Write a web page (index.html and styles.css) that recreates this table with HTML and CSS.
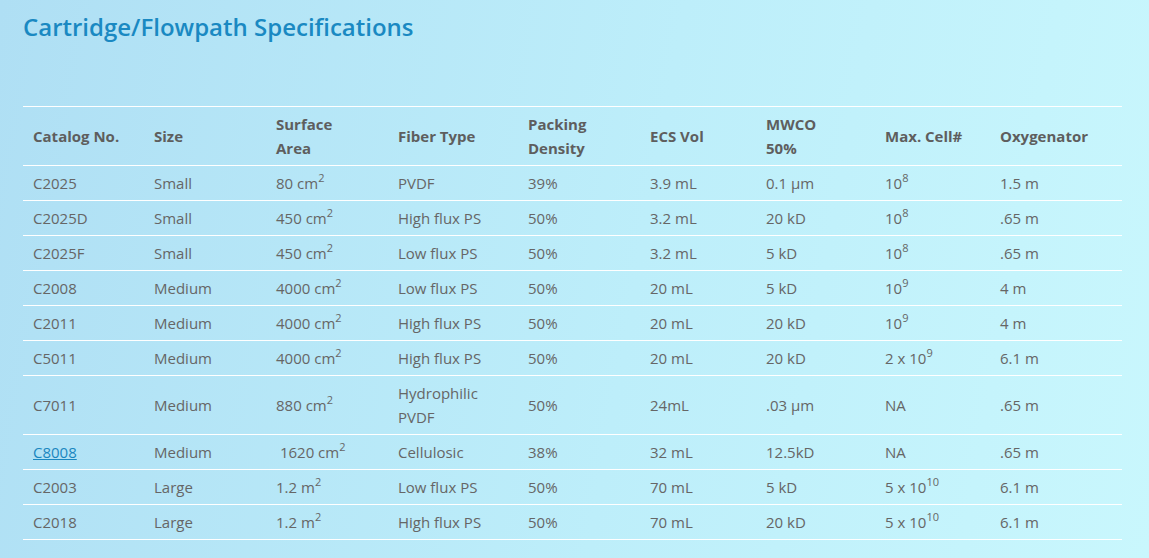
FILE: index.html
```html
<!DOCTYPE html>
<html lang="en">
<head>
<meta charset="utf-8">
<title>Cartridge/Flowpath Specifications</title>
<link rel="stylesheet" href="styles.css">
</head>
<body>
<main class="page">
  <h1 class="title">Cartridge/Flowpath Specifications</h1>
  <table class="specs">
    <colgroup>
      <col class="c1"><col class="c2"><col class="c3"><col class="c4"><col class="c5"><col class="c6"><col class="c7"><col class="c8"><col class="c9">
    </colgroup>
    <thead>
      <tr>
        <th>Catalog No.</th><th>Size</th><th>Surface<br>Area</th><th>Fiber Type</th><th>Packing<br>Density</th><th>ECS Vol</th><th>MWCO<br>50%</th><th>Max. Cell#</th><th>Oxygenator</th>
      </tr>
    </thead>
    <tbody>
      <tr><td>C2025</td><td>Small</td><td>80 cm<sup>2</sup></td><td>PVDF</td><td>39%</td><td>3.9 mL</td><td>0.1 µm</td><td>10<sup>8</sup></td><td>1.5 m</td></tr>
      <tr><td>C2025D</td><td>Small</td><td>450 cm<sup>2</sup></td><td>High flux PS</td><td>50%</td><td>3.2 mL</td><td>20 kD</td><td>10<sup>8</sup></td><td>.65 m</td></tr>
      <tr><td>C2025F</td><td>Small</td><td>450 cm<sup>2</sup></td><td>Low flux PS</td><td>50%</td><td>3.2 mL</td><td>5 kD</td><td>10<sup>8</sup></td><td>.65 m</td></tr>
      <tr><td>C2008</td><td>Medium</td><td>4000 cm<sup>2</sup></td><td>Low flux PS</td><td>50%</td><td>20 mL</td><td>5 kD</td><td>10<sup>9</sup></td><td>4 m</td></tr>
      <tr><td>C2011</td><td>Medium</td><td>4000 cm<sup>2</sup></td><td>High flux PS</td><td>50%</td><td>20 mL</td><td>20 kD</td><td>10<sup>9</sup></td><td>4 m</td></tr>
      <tr><td>C5011</td><td>Medium</td><td>4000 cm<sup>2</sup></td><td>High flux PS</td><td>50%</td><td>20 mL</td><td>20 kD</td><td>2 x 10<sup>9</sup></td><td>6.1 m</td></tr>
      <tr><td>C7011</td><td>Medium</td><td>880 cm<sup>2</sup></td><td>Hydrophilic<br>PVDF</td><td>50%</td><td>24mL</td><td>.03 µm</td><td>NA</td><td>.65 m</td></tr>
      <tr><td><a class="link" href="#">C8008</a></td><td>Medium</td><td>&nbsp;1620 cm<sup>2</sup></td><td>Cellulosic</td><td>38%</td><td>32 mL</td><td>12.5kD</td><td>NA</td><td>.65 m</td></tr>
      <tr><td>C2003</td><td>Large</td><td>1.2 m<sup>2</sup></td><td>Low flux PS</td><td>50%</td><td>70 mL</td><td>5 kD</td><td>5 x 10<sup>10</sup></td><td>6.1 m</td></tr>
      <tr><td>C2018</td><td>Large</td><td>1.2 m<sup>2</sup></td><td>High flux PS</td><td>50%</td><td>70 mL</td><td>20 kD</td><td>5 x 10<sup>10</sup></td><td>6.1 m</td></tr>
    </tbody>
  </table>
</main>
</body>
</html>
```
FILE: styles.css
```css
html, body {
  margin: 0;
  padding: 0;
  height: 100%;
}
body {
  background: linear-gradient(100deg, #afdff4 0%, #bdeefa 55%, #c9f7fd 100%);
  font-family: "Open Sans", "Liberation Sans", sans-serif;
  color: #666;
}
.page {
  padding: 10px 27px 0 23px;
}
.title {
  margin: 0;
  font-size: 24px;
  font-weight: 600;
  line-height: 34px;
  color: #1a89c2;
}
.specs {
  margin-top: 62px;
  width: 1099px;
  border-collapse: collapse;
  border-top: 1px solid #fff;
  font-size: 15px;
  table-layout: fixed;
}
.c1 { width: 121px; }
.c2 { width: 122px; }
.c3 { width: 122px; }
.c4 { width: 130px; }
.c5 { width: 122px; }
.c6 { width: 116px; }
.c7 { width: 119px; }
.c8 { width: 115px; }
.c9 { width: 132px; }
.specs th, .specs td {
  text-align: left;
  vertical-align: middle;
  padding: 5px 10px;
  line-height: 24px;
  border-bottom: 1px solid #fff;
}
.specs th {
  font-weight: 700;
  color: #5e5e5e;
}
.specs sup {
  font-size: 11px;
  line-height: 0;
  vertical-align: 7px;
}
.link {
  color: #1a87c0;
  text-decoration: underline;
}
```
